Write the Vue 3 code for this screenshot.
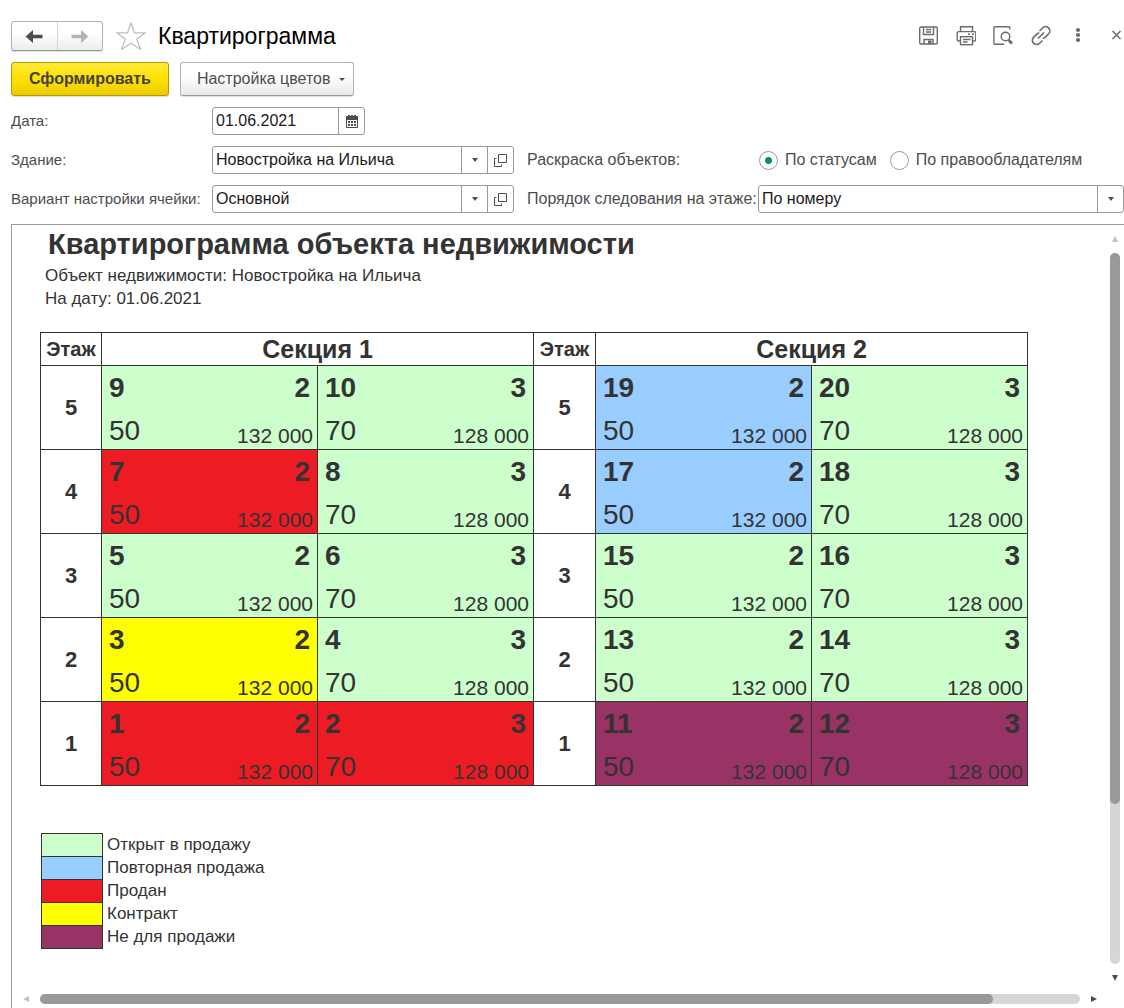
<script setup>
import { ref } from 'vue'

const date = ref('01.06.2021')
const building = ref('Новостройка на Ильича')
const variant = ref('Основной')
const order = ref('По номеру')
const coloring = ref('status')

const flat = (number, status = 'open') => ({
  number,
  status,
  rooms: number % 2 ? 2 : 3,
  area: number % 2 ? 50 : 70,
  price: number % 2 ? '132 000' : '128 000',
})

const floors = [
  { level: 5, sections: [[flat(9), flat(10)], [flat(19, 'resale'), flat(20)]] },
  { level: 4, sections: [[flat(7, 'sold'), flat(8)], [flat(17, 'resale'), flat(18)]] },
  { level: 3, sections: [[flat(5), flat(6)], [flat(15), flat(16)]] },
  { level: 2, sections: [[flat(3, 'contract'), flat(4)], [flat(13), flat(14)]] },
  { level: 1, sections: [[flat(1, 'sold'), flat(2, 'sold')], [flat(11, 'closed'), flat(12, 'closed')]] },
]

const legend = [
  { status: 'open', title: 'Открыт в продажу' },
  { status: 'resale', title: 'Повторная продажа' },
  { status: 'sold', title: 'Продан' },
  { status: 'contract', title: 'Контракт' },
  { status: 'closed', title: 'Не для продажи' },
]
</script>

<template>
  <main class="page">
    <header class="titlebar">
      <div class="history">
        <button type="button" aria-label="Назад">
          <svg width="18" height="14" viewBox="0 0 18 14"><path d="M0.500 7.500L8 1v4.800h9.500v3.400H8V14z" fill="#4d4d4d" /></svg>
        </button>
        <button type="button" aria-label="Вперёд">
          <svg width="18" height="14" viewBox="0 0 18 14"><path d="M17.500 7.500L10 1v4.800H.500v3.400H10V14z" fill="#b3b3b3" /></svg>
        </button>
      </div>
      <button type="button" class="star" aria-label="В избранное">
        <svg width="30" height="28" viewBox="0 0 30 28"><path d="M15 1l3.500 9.800h10.700l-8.500 6.400 3.900 10.300L15 21.300 5.400 27.500l3.900-10.300L.800 10.800h10.700z" fill="#fff" stroke="#b8bfc7" stroke-width="1.200" /></svg>
      </button>
      <h1>Квартирограмма</h1>
      <div class="tools">
        <button type="button" aria-label="Сохранить">
          <svg width="24" height="24" viewBox="0 0 24 24" fill="none" stroke="#6b6b6b" stroke-width="1.400"><rect x="5.700" y="3" width="17.600" height="17" rx="1.500" /><path d="M9.500 3v7.500h10V3M12 5.500h5M12 8h5M10 20v-4.500h9V20" /><path d="M14 16.500h3.500V20H14z" fill="#6b6b6b" stroke="none" /></svg>
        </button>
        <button type="button" aria-label="Печать">
          <svg width="24" height="24" viewBox="0 0 24 24" fill="none" stroke="#6b6b6b" stroke-width="1.400"><path d="M8.500 7.500V2.700h12v4.800M8.500 17H6.700a1.500 1.500 0 0 1-1.500-1.500V9.300a1.700 1.700 0 0 1 1.700-1.700h15.200a1.700 1.700 0 0 1 1.700 1.700v6.200a1.500 1.500 0 0 1-1.500 1.500h-1.800" /><rect x="8.500" y="12.700" width="12" height="8" /><path d="M11 15.500h7.500M11 18h4.500M16 10.200h2M20 10.200h2" /></svg>
        </button>
        <button type="button" aria-label="Предварительный просмотр">
          <svg width="24" height="24" viewBox="0 0 24 24" fill="none" stroke="#6b6b6b" stroke-width="1.400"><path d="M19.800 5.500V3.700a1 1 0 0 0-1-1H4.900a1 1 0 0 0-1 1v15.500a1 1 0 0 0 1 1h9.300" /><circle cx="15.500" cy="12.500" r="4.300" /><path d="M18.500 16l3.500 3.500" stroke-width="2.600" /></svg>
        </button>
        <button type="button" aria-label="Получить ссылку">
          <svg width="24" height="24" viewBox="0 0 24 24" fill="none" stroke="#6b6b6b" stroke-width="1.600"><path d="M11.500 7l3-3a4.100 4.100 0 0 1 6.200 5.800l-3.300 3.300a4 4 0 0 1-2.600 1.100M14.500 16.500l-2.800 2.700a4.100 4.100 0 0 1-6.200-5.800l3.300-3.300a4 4 0 0 1 2.600-1.100M10 14.500l6-6" /></svg>
        </button>
        <button type="button" aria-label="Ещё">
          <svg width="24" height="24" viewBox="0 0 24 24" fill="#6b6b6b"><circle cx="12" cy="6" r="2.100" /><circle cx="12" cy="11" r="2.100" /><circle cx="12" cy="16" r="2.100" /></svg>
        </button>
        <button type="button" aria-label="Закрыть">
          <svg width="24" height="24" viewBox="0 0 24 24" fill="none" stroke="#6b6b6b" stroke-width="1.500"><path d="M8.500 7l8 8M16.500 7l-8 8" /></svg>
        </button>
      </div>
    </header>

    <div class="actions">
      <button type="button" class="btn primary">Сформировать</button>
      <button type="button" class="btn">
        Настройка цветов
        <svg width="6" height="3" viewBox="0 0 6 3"><path d="M0 0h6L3 3z" fill="#4d4d4d" /></svg>
      </button>
    </div>

    <form class="params" @submit.prevent>
      <label for="date" class="first">Дата:</label>
      <div class="field date">
        <input id="date" v-model="date" type="text" />
        <button type="button" aria-label="Выбрать дату">
          <svg width="12" height="13" viewBox="0 0 12 13"><path d="M1 1h10a1 1 0 0 1 1 1v10a1 1 0 0 1-1 1H1a1 1 0 0 1-1-1V2a1 1 0 0 1 1-1z" fill="#4d4d4d" /><path d="M1 5h10v7H1z" fill="#fff" /><path d="M2 0h2v3H2zM8 0h2v3H8zM5 0h2v2H5z" fill="#4d4d4d" /><path d="M2 6h2v2H2zM5 6h2v2H5zM8 6h2v2H8zM2 9h2v2H2zM5 9h2v2H5zM8 9h2v2H8z" fill="#4d4d4d" /></svg>
        </button>
      </div>

      <label for="building" class="first">Здание:</label>
      <div class="field lookup">
        <select id="building" v-model="building"><option>Новостройка на Ильича</option></select>
        <span class="arrow"><svg width="6" height="4" viewBox="0 0 6 4"><path d="M0 0h6L3 4z" fill="#4d4d4d" /></svg></span>
        <button type="button" aria-label="Открыть здание">
          <svg width="13" height="13" viewBox="0 0 13 13" fill="none" stroke="#4d4d4d"><path d="M4.500.500h8v8h-8zM2.500 4.500h-2v8h7v-2" /></svg>
        </button>
      </div>
      <span id="coloring" class="second">Раскраска объектов:</span>
      <div class="radios" role="radiogroup" aria-labelledby="coloring">
        <label><input v-model="coloring" type="radio" name="coloring" value="status" />По статусам</label>
        <label><input v-model="coloring" type="radio" name="coloring" value="owner" />По правообладателям</label>
      </div>

      <label for="variant" class="first">Вариант настройки ячейки:</label>
      <div class="field lookup">
        <select id="variant" v-model="variant"><option>Основной</option></select>
        <span class="arrow"><svg width="6" height="4" viewBox="0 0 6 4"><path d="M0 0h6L3 4z" fill="#4d4d4d" /></svg></span>
        <button type="button" aria-label="Открыть вариант настройки">
          <svg width="13" height="13" viewBox="0 0 13 13" fill="none" stroke="#4d4d4d"><path d="M4.500.500h8v8h-8zM2.500 4.500h-2v8h7v-2" /></svg>
        </button>
      </div>
      <label for="order" class="second">Порядок следования на этаже:</label>
      <div class="field">
        <select id="order" v-model="order"><option>По номеру</option></select>
        <span class="arrow"><svg width="6" height="4" viewBox="0 0 6 4"><path d="M0 0h6L3 4z" fill="#4d4d4d" /></svg></span>
      </div>
    </form>

    <section class="report">
      <div class="sheet">
        <h2>Квартирограмма объекта недвижимости</h2>
        <p>Объект недвижимости: Новостройка на Ильича</p>
        <p>На дату: 01.06.2021</p>

        <table>
          <colgroup>
            <col class="level narrow" /><col class="flat" /><col class="flat" />
            <col class="level" /><col class="flat" /><col class="flat" />
          </colgroup>
          <thead>
            <tr>
              <template v-for="s in 2" :key="s">
                <th class="caption">Этаж</th>
                <th class="section" colspan="2">Секция {{ s }}</th>
              </template>
            </tr>
          </thead>
          <tbody>
            <tr v-for="floor in floors" :key="floor.level">
              <template v-for="(flats, s) in floor.sections" :key="s">
                <th>{{ floor.level }}</th>
                <td v-for="f in flats" :key="f.number" :class="f.status">
                  <div class="line top"><b>{{ f.number }}</b><b>{{ f.rooms }}</b></div>
                  <div class="line bottom"><span>{{ f.area }}</span><span class="price">{{ f.price }}</span></div>
                </td>
              </template>
            </tr>
          </tbody>
        </table>

        <ul class="legend">
          <li v-for="item in legend" :key="item.status"><i :class="item.status"></i>{{ item.title }}</li>
        </ul>
      </div>

      <div class="bar vertical" aria-hidden="true">
        <svg width="6" height="6" viewBox="0 0 6 6"><path d="M3 0l3 6H0z" fill="#c0c0c0" /></svg>
        <div class="track"><div class="thumb"></div></div>
        <svg width="6" height="6" viewBox="0 0 6 6"><path d="M0 0h6L3 6z" fill="#4d4d4d" /></svg>
      </div>
      <div class="bar horizontal" aria-hidden="true">
        <svg width="6" height="6" viewBox="0 0 6 6"><path d="M6 0v6L0 3z" fill="#c0c0c0" /></svg>
        <div class="track"><div class="thumb"></div></div>
        <svg width="6" height="6" viewBox="0 0 6 6"><path d="M0 0l6 3-6 3z" fill="#4d4d4d" /></svg>
      </div>
    </section>
  </main>
</template>

<style>
body {
  margin: 0;
  background: #fff;
}
</style>

<style scoped>
* {
  box-sizing: border-box;
}

.page {
  display: flex;
  flex-direction: column;
  gap: 11px;
  min-height: 100vh;
  padding: 21px 0 0 11px;
  color: #4d4d4d;
  font: 16px/20px "Liberation Sans", Arial, sans-serif;
}

button,
input,
select {
  margin: 0;
  padding: 0;
  border: 0;
  background: none;
  color: inherit;
  font: inherit;
}

svg {
  display: block;
  flex: none;
}

.titlebar {
  display: flex;
  align-items: center;
  height: 30px;
}

.history {
  display: flex;
  width: 92px;
  height: 30px;
  border: 1px solid #b3b3b3;
  border-bottom-color: #999;
  border-radius: 3px;
  background: linear-gradient(#fff 40%, #ececec);
  box-shadow: 0 1px 1px #ddd;
}

.history button {
  display: flex;
  flex: 1;
  align-items: center;
  justify-content: center;
}

.history button + button {
  border-left: 1px solid #d4d4d4;
}

.star {
  margin: 0 12px 0 13px;
}

h1 {
  margin: 0;
  color: #000;
  font-size: 23px;
  font-weight: 400;
  line-height: 30px;
}

.tools {
  display: flex;
  gap: 22px;
  margin-left: auto;
}

.tools button {
  display: flex;
  justify-content: center;
  width: 16px;
}

.actions {
  display: flex;
  gap: 11px;
}

.btn {
  display: flex;
  align-items: center;
  gap: 8px;
  height: 34px;
  padding: 0 8px 0 16px;
  border: 1px solid #b3b3b3;
  border-bottom-color: #999;
  border-radius: 3px;
  background: linear-gradient(#fff 40%, #e9e9e9);
  box-shadow: 0 1px 1px #ddd;
}

.btn.primary {
  padding: 0 17px;
  border-color: #b09a00;
  background: linear-gradient(#ffea3a, #ffe000 50%, #eccb00);
  color: #424242;
  font-weight: 700;
}

.params {
  display: grid;
  grid-template-columns: 201px 302px 244px 1fr;
  grid-auto-rows: 28px;
  row-gap: 11px;
  align-items: center;
  white-space: nowrap;
}

.first {
  grid-column: 1;
  font-size: 15px;
}

.second {
  padding-left: 13px;
}

.field {
  display: grid;
  grid-template-columns: 1fr 26px;
  grid-template-rows: 26px;
  border: 1px solid #999;
  border-radius: 3px;
  color: #1a1a1a;
}

.field.lookup {
  grid-template-columns: 1fr 26px 26px;
}

.field.date {
  width: 153px;
}

.field input,
.field select {
  grid-row: 1;
  min-width: 0;
  width: 100%;
  padding: 0 3px;
  outline: 0;
}

.field select {
  grid-column: 1 / 3;
  appearance: none;
}

.field .arrow {
  grid-row: 1;
  grid-column: 2;
  pointer-events: none;
}

.field button,
.field .arrow {
  display: flex;
  align-items: center;
  justify-content: center;
  border-left: 1px solid #999;
}

.radios {
  display: flex;
  gap: 13px;
  padding-left: 1px;
}

.radios label {
  display: flex;
  align-items: center;
  gap: 7px;
}

.radios input {
  appearance: none;
  width: 19px;
  height: 19px;
  border: 1px solid #999;
  border-radius: 50%;
}

.radios input:checked {
  background: radial-gradient(circle, #009646 3px, #fff 4px);
}

.report {
  display: grid;
  flex: 1;
  grid-template-columns: 1fr 18px;
  grid-template-rows: 1fr 18px;
  border: solid #999;
  border-width: 1px 0 0 1px;
  color: #333;
}

.sheet {
  padding: 0 28px 24px;
}

h2 {
  margin: 0 8px;
  font-size: 29px;
  line-height: 39px;
}

p {
  margin: 0 5px;
  font-size: 17px;
  line-height: 23px;
}

table {
  width: 987px;
  margin: 22px 0 47px;
  border-collapse: collapse;
  table-layout: fixed;
}

.level {
  width: 62px;
}

.level.narrow {
  width: 61px;
}

.flat {
  width: 216px;
}

th,
td {
  height: 84px;
  padding: 0;
  border: 1px solid #333;
  font-size: 22px;
  line-height: 24px;
}

thead th {
  height: 33px;
}

.caption {
  font-size: 20px;
}

.section {
  font-size: 25px;
}

td {
  padding-top: 4px;
  font-size: 28px;
  line-height: 32px;
}

.line {
  display: flex;
  align-items: flex-end;
  justify-content: space-between;
}

.top {
  padding: 0 7px 11px;
}

.bottom {
  padding: 0 4px 0 7px;
}

.price {
  font-size: 21px;
  line-height: 22px;
}

.legend {
  margin: 0;
  padding: 0 0 0 1px;
  font-size: 17px;
  list-style: none;
}

.legend li {
  display: flex;
  align-items: center;
  gap: 4px;
  height: 23px;
}

.legend i {
  width: 62px;
  height: 24px;
  flex: none;
  border: 1px solid #333;
}

.open {
  background: #cfc;
}

.resale {
  background: #9cf;
}

.sold {
  background: #ed1c24;
}

.contract {
  background: #ff0;
}

.closed {
  background: #936;
}

.bar {
  display: flex;
  align-items: center;
  gap: 11px;
}

.vertical {
  flex-direction: column;
  padding: 11px 0 9px;
}

.horizontal {
  padding: 0 9px 0 11px;
}

.track {
  display: flex;
  flex: 1;
  border-radius: 5px;
  background: #d6d6d6;
}

.vertical .track {
  flex-direction: column;
  width: 10px;
}

.horizontal .track {
  height: 10px;
}

.thumb {
  border-radius: 5px;
  background: #999;
}

.vertical .thumb {
  height: 77.5%;
}

.horizontal .thumb {
  width: 91.6%;
}
</style>
